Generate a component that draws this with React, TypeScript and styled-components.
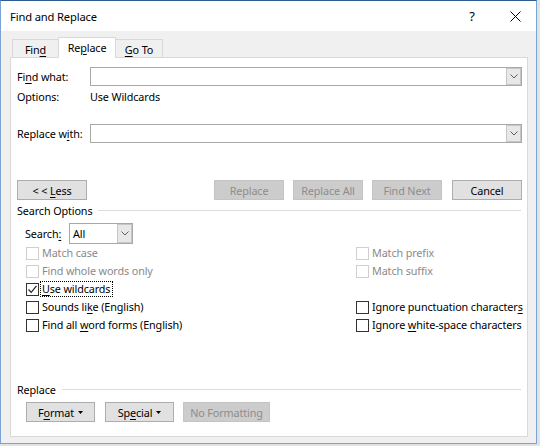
import React from 'react';
import styled, { createGlobalStyle } from 'styled-components';

const Global = createGlobalStyle`
  html, body { margin: 0; padding: 0; }
  body {
    background: #dfe3e8;
    font-family: "Noto Sans", "Open Sans", sans-serif;
    font-size: 10.8px;
    letter-spacing: -0.12px;
    color: #000;
  }
  #root { width: 540px; height: 446px; }
`;

const Window = styled.div`
  width: 537px;
  height: 444px;
  box-sizing: border-box;
  border: 1px solid #7aa3d3;
  border-top-color: #2d5b8f;
  display: flex;
  flex-direction: column;
  background: #f0f0f0;
`;

const TitleBar = styled.div`
  height: 30px;
  flex: none;
  background: #fff;
  display: flex;
  align-items: center;
  padding: 0 1px 0 9px;
`;

const Title = styled.div`
  flex: 1;
  font-size: 11.2px;
  letter-spacing: -0.15px;
`;

const TitleButton = styled.div<{ $w: number }>`
  width: ${(p) => p.$w}px;
  height: 30px;
  display: flex;
  align-items: center;
  justify-content: center;
  font-size: 13px;
  & + & { margin-left: 8px; }
`;

const Body = styled.div`
  flex: 1;
  display: flex;
  flex-direction: column;
  padding: 6px 8px 6px 9px;
`;

const TabStrip = styled.div`
  height: 21px;
  display: flex;
  align-items: flex-end;
  padding-left: 2px;
  margin-bottom: -1px;
  position: relative;
  z-index: 1;
`;

const Tab = styled.div<{ $w: number; $active?: boolean }>`
  width: ${(p) => p.$w}px;
  height: ${(p) => (p.$active ? 21 : 19)}px;
  box-sizing: border-box;
  border: 1px solid #d9d9d9;
  border-bottom-color: ${(p) => (p.$active ? '#fff' : '#d9d9d9')};
  background: ${(p) => (p.$active ? '#fff' : '#f0f0f0')};
  display: flex;
  align-items: center;
  justify-content: center;
  padding-top: ${(p) => (p.$active ? 0 : 1)}px;
  & + & { margin-left: -1px; }
`;

const Panel = styled.div`
  flex: 1;
  background: #fff;
  border: 1px solid #d9d9d9;
  display: flex;
  flex-direction: column;
  padding: 0 5px 0 6px;
`;

const FieldRow = styled.div<{ $top: number }>`
  display: flex;
  align-items: center;
  height: 19px;
  margin-top: ${(p) => p.$top}px;
`;

const FieldLabel = styled.div`
  width: 73px;
  flex: none;
  white-space: nowrap;
`;

const Combo = styled.div<{ $w?: number }>`
  ${(p) => (p.$w ? `width: ${p.$w}px; flex: none;` : 'flex: 1;')}
  height: 100%;
  box-sizing: border-box;
  border: 1px solid #a9a9a9;
  background: #fff;
  display: flex;
  align-items: stretch;
`;

const ComboText = styled.div`
  flex: 1;
  display: flex;
  align-items: center;
  padding-left: 3px;
`;

const DropButton = styled.div`
  width: 15px;
  flex: none;
  box-sizing: border-box;
  border: 1px solid #c6c6c6;
  background: #e8e8e8;
  display: flex;
  align-items: center;
  justify-content: center;
`;

const InfoRow = styled.div`
  display: flex;
  align-items: center;
  height: 16px;
  margin-top: 2px;
`;

const ButtonRow = styled.div<{ $top: number; $pad?: number }>`
  display: flex;
  align-items: center;
  height: 20px;
  margin-top: ${(p) => p.$top}px;
  padding-left: ${(p) => p.$pad ?? 0}px;
  gap: 9px;
`;

const Spacer = styled.div`
  flex: 1;
`;

const Button = styled.button<{ $w: number }>`
  width: ${(p) => p.$w}px;
  height: 20px;
  box-sizing: border-box;
  padding: 0;
  margin: 0;
  font: inherit;
  letter-spacing: inherit;
  color: #000;
  background: #e1e1e1;
  border: 1px solid #adadad;
  display: flex;
  align-items: center;
  justify-content: center;
  gap: 4px;
  white-space: nowrap;
  &:disabled {
    background: #cccccc;
    border-color: #c4c4c4;
    color: #8d8d8d;
  }
`;

const GapButton = styled(Button)`
  margin-left: 1px;
`;

const SectionHeader = styled.div<{ $top: number }>`
  display: flex;
  align-items: center;
  height: 16px;
  margin-top: ${(p) => p.$top}px;
  padding-right: 1px;
  white-space: nowrap;
`;

const SectionLine = styled.div`
  flex: 1;
  height: 1px;
  background: #dcdcdc;
  margin-left: 6px;
`;

const SearchRow = styled.div`
  display: flex;
  align-items: center;
  height: 21px;
  margin-top: 5px;
  padding-left: 8px;
`;

const SearchLabel = styled.div`
  width: 44px;
  flex: none;
`;

const CheckGrid = styled.div`
  display: grid;
  grid-template-columns: 330px 1fr;
  grid-auto-rows: 18px;
  margin-top: 0;
  padding-left: 9px;
`;

const CheckItem = styled.div<{ $disabled?: boolean }>`
  display: flex;
  align-items: center;
  white-space: nowrap;
  color: ${(p) => (p.$disabled ? '#8a8a8a' : '#000')};
`;

const Box = styled.div<{ $disabled?: boolean }>`
  width: 13px;
  height: 13px;
  box-sizing: border-box;
  border: 1px solid ${(p) => (p.$disabled ? '#cfcfcf' : '#333')};
  background: #fff;
  flex: none;
  display: flex;
  align-items: center;
  justify-content: center;
`;

const CheckLabel = styled.span<{ $focus?: boolean }>`
  margin-left: ${(p) => (p.$focus ? 1 : 3)}px;
  padding: ${(p) => (p.$focus ? '0 2px 0 1px' : '0')};
  border: ${(p) => (p.$focus ? '1px dotted #000' : 'none')};
  line-height: 14px;
`;

const Key = styled.u`
  text-underline-offset: 2px;
`;

const Caret = () => (
  <svg width="5" height="3" viewBox="0 0 5 3">
    <polygon points="0,0 5,0 2.5,3" fill="#000" />
  </svg>
);

const Chevron = () => (
  <svg width="8" height="5" viewBox="0 0 8 5">
    <polyline points="0.5,0.5 4,4 7.5,0.5" fill="none" stroke="#606060" strokeWidth="1" />
  </svg>
);

const CheckMark = () => (
  <svg width="11" height="11" viewBox="0 0 11 11">
    <polyline points="1.5,5.5 4.2,8.3 9.5,1.8" fill="none" stroke="#222" strokeWidth="1.2" />
  </svg>
);

type CheckProps = { label: React.ReactNode; checked?: boolean; disabled?: boolean; focus?: boolean };

const Check = ({ label, checked, disabled, focus }: CheckProps) => (
  <CheckItem $disabled={disabled}>
    <Box $disabled={disabled}>{checked && <CheckMark />}</Box>
    <CheckLabel $focus={focus}>{label}</CheckLabel>
  </CheckItem>
);

export default function App() {
  return (
    <>
      <Global />
      <Window>
        <TitleBar>
          <Title>Find and Replace</Title>
          <TitleButton $w={30}>?</TitleButton>
          <TitleButton $w={40}>
            <svg width="11" height="11" viewBox="0 0 11 11">
              <line x1="0.5" y1="0.5" x2="10.5" y2="10.5" stroke="#000" strokeWidth="1" />
              <line x1="10.5" y1="0.5" x2="0.5" y2="10.5" stroke="#000" strokeWidth="1" />
            </svg>
          </TitleButton>
        </TitleBar>
        <Body>
          <TabStrip>
            <Tab $w={47}>
              <span>
                Fin<Key>d</Key>
              </span>
            </Tab>
            <Tab $w={58} $active>
              <span>
                Re<Key>p</Key>lace
              </span>
            </Tab>
            <Tab $w={48}>
              <span>
                <Key>G</Key>o To
              </span>
            </Tab>
          </TabStrip>
          <Panel>
            <FieldRow $top={9}>
              <FieldLabel>
                Fi<Key>n</Key>d what:
              </FieldLabel>
              <Combo>
                <ComboText />
                <DropButton>
                  <Chevron />
                </DropButton>
              </Combo>
            </FieldRow>
            <InfoRow>
              <FieldLabel>Options:</FieldLabel>
              <div>Use Wildcards</div>
            </InfoRow>
            <FieldRow $top={20}>
              <FieldLabel>
                Replace w<Key>i</Key>th:
              </FieldLabel>
              <Combo>
                <ComboText />
                <DropButton>
                  <Chevron />
                </DropButton>
              </Combo>
            </FieldRow>
            <ButtonRow $top={37}>
              <Button $w={70}>
                <span>
                  {'< < '}
                  <Key>L</Key>ess
                </span>
              </Button>
              <Spacer />
              <Button $w={70} disabled>
                Replace
              </Button>
              <Button $w={70} disabled>
                Replace All
              </Button>
              <Button $w={70} disabled>
                Find Next
              </Button>
              <GapButton $w={70}>Cancel</GapButton>
            </ButtonRow>
            <SectionHeader $top={2}>
              Search Options
              <SectionLine />
            </SectionHeader>
            <SearchRow>
              <SearchLabel>
                Search<Key>:</Key>
              </SearchLabel>
              <Combo $w={64}>
                <ComboText>All</ComboText>
                <DropButton>
                  <Chevron />
                </DropButton>
              </Combo>
            </SearchRow>
            <CheckGrid>
              <Check label="Match case" disabled />
              <Check label="Match prefix" disabled />
              <Check label="Find whole words only" disabled />
              <Check label="Match suffix" disabled />
              <Check
                label={
                  <>
                    <Key>U</Key>se wildcards
                  </>
                }
                checked
                focus
              />
              <div />
              <Check
                label={
                  <>
                    Sounds li<Key>k</Key>e (English)
                  </>
                }
              />
              <Check
                label={
                  <>
                    Ignore punctuation character<Key>s</Key>
                  </>
                }
              />
              <Check
                label={
                  <>
                    Find all <Key>w</Key>ord forms (English)
                  </>
                }
              />
              <Check
                label={
                  <>
                    Ignore <Key>w</Key>hite-space characters
                  </>
                }
              />
            </CheckGrid>
            <SectionHeader $top={47}>
              Replace
              <SectionLine />
            </SectionHeader>
            <ButtonRow $top={5} $pad={9}>
              <Button $w={69}>
                <span>
                  F<Key>o</Key>rmat
                </span>
                <Caret />
              </Button>
              <GapButton $w={69}>
                <span>
                  Sp<Key>e</Key>cial
                </span>
                <Caret />
              </GapButton>
              <Button $w={87} disabled>
                No Formatting
              </Button>
            </ButtonRow>
          </Panel>
        </Body>
      </Window>
    </>
  );
}
